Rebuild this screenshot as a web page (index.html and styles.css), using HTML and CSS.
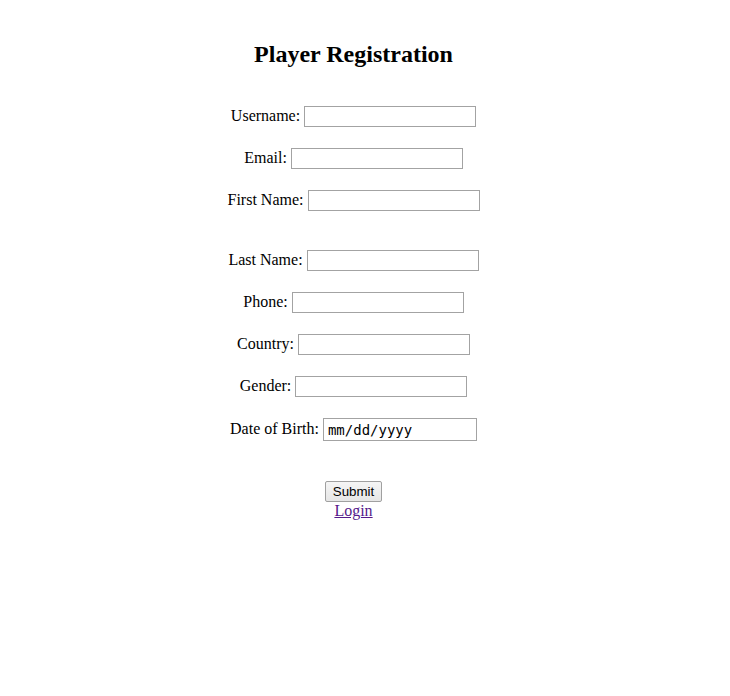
FILE: index.html
```html
<!DOCTYPE html>
<html>
<head>
<meta charset="utf-8">
<title>Player Registration</title>
<link rel="stylesheet" href="styles.css">
</head>
<body>
<div class="page">
  <h2 class="title">Player Registration</h2>
  <form class="form">
    <div class="field"><label>Username:</label><input class="text" type="text"></div>
    <div class="field"><label>Email:</label><input class="text" type="text"></div>
    <div class="field field-gap"><label>First Name:</label><input class="text" type="text"></div>
    <div class="field"><label>Last Name:</label><input class="text" type="text"></div>
    <div class="field"><label>Phone:</label><input class="text" type="text"></div>
    <div class="field"><label>Country:</label><input class="text" type="text"></div>
    <div class="field"><label>Gender:</label><input class="text" type="text"></div>
    <div class="field field-date"><label>Date of Birth:</label><span class="date">mm/dd/yyyy</span></div>
    <div class="actions">
      <button class="submit" type="button">Submit</button>
      <a class="login" href="#">Login</a>
    </div>
  </form>
</div>
</body>
</html>
```
FILE: styles.css
```css
html, body {
  background: #fff;
}
body {
  margin: 8px;
  font-family: "Liberation Serif", "Times New Roman", serif;
  font-size: 16px;
  color: #000;
}
.page {
  width: 691px;
}
.title {
  margin: 33px 0 0 0;
  font-size: 24px;
  font-weight: bold;
  text-align: center;
  line-height: 27px;
}
.form {
  margin-top: 38px;
  display: flex;
  flex-direction: column;
  align-items: center;
}
.field {
  display: flex;
  align-items: center;
  justify-content: center;
  gap: 4px;
  height: 21px;
  margin-bottom: 21px;
}
.field-gap {
  margin-bottom: 39px;
}
.field-date {
  height: 23px;
  margin-bottom: 40px;
}
.field label {
  line-height: 18px;
  margin-bottom: 2px;
}
.text {
  box-sizing: border-box;
  width: 172px;
  height: 21px;
  margin: 0;
  padding: 1px 2px;
  border: 1px solid #a3a3a3;
  background: #fff;
  font-family: "DejaVu Sans", sans-serif;
  font-size: 13.33px;
}
.date {
  box-sizing: border-box;
  display: flex;
  align-items: center;
  width: 154px;
  height: 23px;
  padding: 0 4px;
  border: 1px solid #a3a3a3;
  background: #fff;
  font-family: "DejaVu Sans Mono", monospace;
  font-size: 14px;
  color: #000;
}
.actions {
  display: flex;
  flex-direction: column;
  align-items: center;
}
.submit {
  box-sizing: border-box;
  width: 57px;
  height: 21px;
  margin: 0;
  padding: 0 6px;
  border: 1px solid #a0a0a0;
  border-radius: 2px;
  background: linear-gradient(#f5f5f5, #e6e6e6);
  font-family: "Liberation Sans", Arial, sans-serif;
  font-size: 13.33px;
  color: #000;
}
.login {
  color: #551a8b;
  text-decoration: underline;
  line-height: 18px;
}
```
